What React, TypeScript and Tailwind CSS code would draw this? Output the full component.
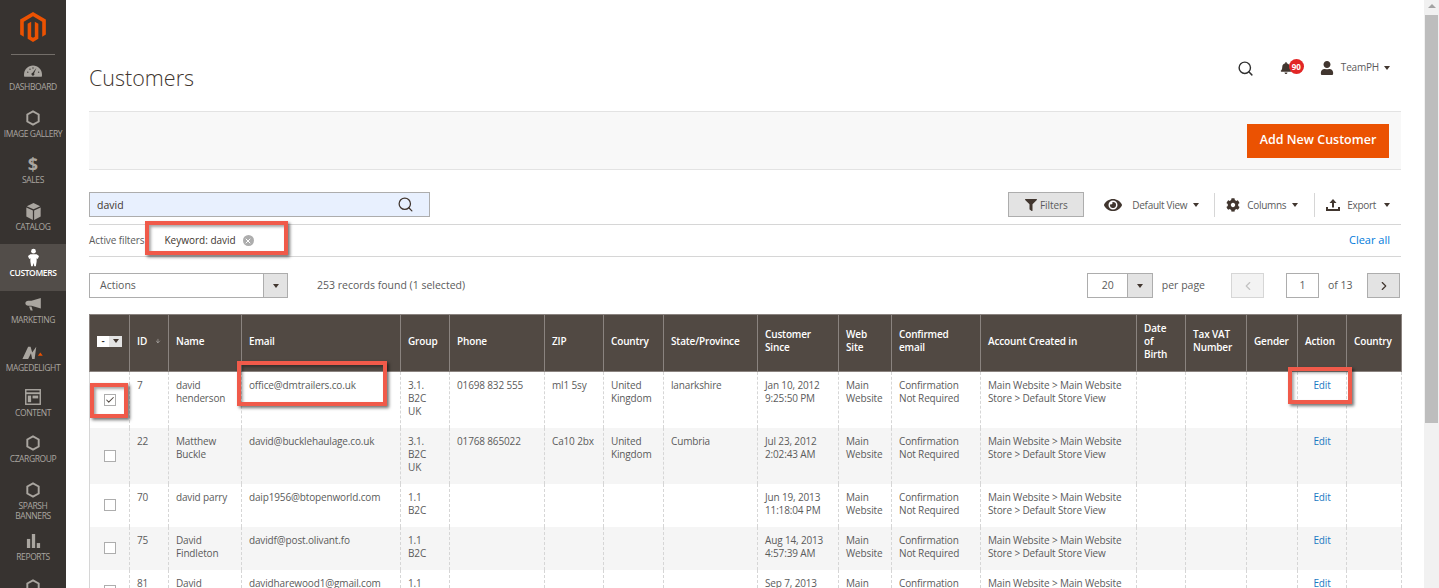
import type { ReactNode } from 'react'
import { Search, ChevronLeft, ChevronRight, ArrowDown, Check, X } from 'lucide-react'
import { FaBell, FaCog, FaEye, FaFilter, FaUser } from 'react-icons/fa'

const Hexagon = () => (
  <svg width="14" height="16" viewBox="0 0 16 18" fill="none" stroke="#aaa6a0" strokeWidth="2.2"><path d="M8 1.5 14.5 5v8L8 16.5 1.5 13V5z" /></svg>
)
const Gauge = () => (
  <svg width="18" height="12" viewBox="0 0 24 15" fill="#aaa6a0"><path d="M12 0C5.4 0 0 5.400 0 12c0 1 .1 2 .4 3h23.200c.3-1 .4-2 .4-3 0-6.600-5.400-12-12-12z" /><path d="M16.500 3.500 13.500 10.500a2 2 0 1 1-2-.8z" fill="#373330" /><circle cx="5" cy="9" r=".9" fill="#373330" /><circle cx="8" cy="5" r=".9" fill="#373330" /><circle cx="12" cy="3.500" r=".9" fill="#373330" /><circle cx="19.500" cy="9" r=".9" fill="#373330" /></svg>
)
const Box = () => (
  <svg width="15" height="17" viewBox="0 0 16 19" fill="#aaa6a0"><path d="M8 0 15.500 3.500 8 7 .5 3.500z" /><path d="M0 5l7.300 3.400V19L0 15z" /><path d="M16 5 8.700 8.400V19L16 15z" /></svg>
)
const Person = () => (
  <svg width="11" height="19" viewBox="0 0 14 22" fill="#fff"><circle cx="7" cy="3" r="3" /><path d="M3 7h8l3 2-1.500 4L11 12v4l-1 6H8l-1-4-1 4H4l-1-6v-4l-1.500 1L0 9z" /></svg>
)
const Megaphone = () => (
  <svg width="17" height="13" viewBox="0 0 20 16" fill="#aaa6a0"><path d="M19 0v13L7.500 9.500H3.500C1.500 9.500 0 8.400 0 6.500s1.500-3 3.500-3h4z" /><path d="M4.500 10.500h3l1.500 5H6.500z" /></svg>
)
const Delight = () => (
  <svg width="22" height="13" viewBox="0 0 26 16" fill="#aaa6a0"><path d="M0 16 7 1h3l2 7 5-7-2 15h-3l-1.500-7L7 16z" /><path d="M19 12l3-4 3 4z" fill="#eb5202" /></svg>
)
const Layout = () => (
  <svg width="16" height="16" viewBox="0 0 17 17" fill="none" stroke="#aaa6a0" strokeWidth="1.500"><rect x=".8" y=".8" width="15.400" height="15.400" /><path d="M.8 4.500h15.400" strokeWidth="2" /><rect x="3" y="7" width="3.500" height="7" fill="#aaa6a0" stroke="none" /><rect x="8" y="7" width="6" height="3" fill="#aaa6a0" stroke="none" /></svg>
)
const Bars = () => (
  <svg width="15" height="14" viewBox="0 0 16 17" fill="#aaa6a0"><rect x="0" y="6" width="4" height="11" /><rect x="6" y="0" width="4" height="17" /><rect x="12" y="11" width="4" height="6" /></svg>
)
const Logo = () => (
  <svg width="26" height="30" viewBox="0 0 24 28" fill="#eb5202"><path d="M12 0 0 7v14l3.400 2V9L12 4l8.600 5v14l3.400-2V7z" /><path d="M13.700 23 12 24l-1.700-1V9L7 11v14l5 3 5-3V11l-3.300-2z" /></svg>
)
const Caret = ({ color = 'border-t-[#41362f]' }: { color?: string }) => (
  <span className={`inline-block w-0 h-0 border-x-[3.500px] border-x-transparent border-t-[4px] ${color}`} />
)

const nav: { label: ReactNode; icon: ReactNode; h: string; active?: boolean }[] = [
  { label: 'DASHBOARD', icon: <Gauge />, h: 'h-[47px]' },
  { label: 'IMAGE GALLERY', icon: <Hexagon />, h: 'h-[46px]' },
  { label: 'SALES', icon: <span className="text-[18px] leading-[18px] font-bold text-[#aaa6a0]">$</span>, h: 'h-[47px]' },
  { label: 'CATALOG', icon: <Box />, h: 'h-[46px]' },
  { label: 'CUSTOMERS', icon: <Person />, h: 'h-[47px]', active: true },
  { label: 'MARKETING', icon: <Megaphone />, h: 'h-[48px]' },
  { label: 'MAGEDELIGHT', icon: <Delight />, h: 'h-[45px]' },
  { label: 'CONTENT', icon: <Layout />, h: 'h-[46px]' },
  { label: 'CZARGROUP', icon: <Hexagon />, h: 'h-[47px]' },
  { label: <>SPARSH<br />BANNERS</>, icon: <Hexagon />, h: 'h-[51px]' },
  { label: 'REPORTS', icon: <Bars />, h: 'h-[46px]' },
  { label: '', icon: <Hexagon />, h: 'h-[46px]' },
]

const Sidebar = () => (
  <aside className="w-[66px] shrink-0 bg-[#373330] flex flex-col items-stretch">
    <div className="h-[54px] shrink-0 flex justify-center pt-[12px]"><Logo /></div>
    <div className="h-px shrink-0 mx-[11px] bg-[#736e69]" />
    <nav className="pt-[3px]">
      {nav.map((n, i) => (
        <div key={i} className={`${n.h} flex flex-col items-center pt-[3px] ${n.active ? 'bg-[#524d49]' : ''}`}>
          <div className="h-[20px] flex items-center justify-center">{n.icon}</div>
          <div className={`mt-[1px] text-center text-[8.500px] leading-[10px] tracking-[-0.4px] whitespace-nowrap ${n.active ? 'text-white font-semibold' : 'text-[#aaa6a0]'}`}>{n.label}</div>
        </div>
      ))}
    </nav>
  </aside>
)

const columns: { title: ReactNode; w: string }[] = [
  { title: '', w: 'w-[40px]' },
  { title: <span className="flex items-center gap-[8px]">ID <ArrowDown size={12} strokeWidth={1.500} /></span>, w: 'w-[39px]' },
  { title: 'Name', w: 'w-[73px]' },
  { title: 'Email', w: 'w-[159px]' },
  { title: 'Group', w: 'w-[49px]' },
  { title: 'Phone', w: 'w-[95px]' },
  { title: 'ZIP', w: 'w-[59px]' },
  { title: 'Country', w: 'w-[60px]' },
  { title: 'State/Province', w: 'w-[94px]' },
  { title: <>Customer<br />Since</>, w: 'w-[81px]' },
  { title: <>Web<br />Site</>, w: 'w-[53px]' },
  { title: <>Confirmed<br />email</>, w: 'w-[89px]' },
  { title: 'Account Created in', w: 'w-[156px]' },
  { title: <>Date<br />of<br />Birth</>, w: 'w-[49px]' },
  { title: <>Tax VAT<br />Number</>, w: 'w-[61px]' },
  { title: 'Gender', w: 'w-[51px]' },
  { title: 'Action', w: 'w-[49px]' },
  { title: 'Country', w: 'w-[55px]' },
]

const rows = [
  { id: '7', name: <>david<br />henderson</>, email: 'office@dmtrailers.co.uk', group: <>3.1.<br />B2C<br />UK</>, phone: '01698 832 555', zip: 'ml1 5sy', country: <>United<br />Kingdom</>, state: 'lanarkshire', since: <>Jan 10, 2012<br />9:25:50 PM</>, h: 'h-[56px]', checked: true },
  { id: '22', name: <>Matthew<br />Buckle</>, email: 'david@bucklehaulage.co.uk', group: <>3.1.<br />B2C<br />UK</>, phone: '01768 865022', zip: 'Ca10 2bx', country: <>United<br />Kingdom</>, state: 'Cumbria', since: <>Jul 23, 2012<br />2:02:43 AM</>, h: 'h-[56px]' },
  { id: '70', name: 'david parry', email: 'daip1956@btopenworld.com', group: <>1.1<br />B2C</>, since: <>Jun 19, 2013<br />11:18:04 PM</>, h: 'h-[43px]' },
  { id: '75', name: <>David<br />Findleton</>, email: 'davidf@post.olivant.fo', group: <>1.1<br />B2C</>, since: <>Aug 14, 2013<br />4:57:39 AM</>, h: 'h-[43px]' },
  { id: '81', name: <>David<br />Harewood</>, email: 'davidharewood1@gmail.com', group: <>1.1<br />B2C</>, since: <>Sep 7, 2013<br />8:12:10 AM</>, h: 'h-[43px]' },
]

const Cell = ({ children, className = '' }: { children?: ReactNode; className?: string }) => (
  <td className={`border-l border-dashed border-[#d6d6d6] px-[7px] pt-[7px] pb-[3px] align-top ${className}`}>{children}</td>
)

const Grid = () => (
  <table className="w-[1312px] table-fixed border-collapse text-[10px] leading-[13px] tracking-[-0.15px] text-[#5b5b5b]">
    <colgroup>{columns.map((c, i) => <col key={i} className={c.w} />)}</colgroup>
    <thead>
      <tr className="h-[57px] bg-[#514943] text-white font-semibold">
        {columns.map((c, i) => (
          <th key={i} className="border border-[#8a837f] px-[7px] pb-[4px] text-left align-middle font-semibold">
            {i === 0 ? (
              <span className="flex justify-center">
                <span className="w-[12px] h-[11px] bg-white text-[#303030] flex items-center justify-center leading-none">-</span>
                <span className="w-[13px] h-[11px] bg-[#e3e3e3] flex items-center justify-center"><Caret /></span>
              </span>
            ) : c.title}
          </th>
        ))}
      </tr>
    </thead>
    <tbody>
      {rows.map((r, i) => (
        <tr key={r.id} className={`${r.h} ${i % 2 ? 'bg-[#f5f5f5]' : 'bg-white'}`}>
          <td className="border-l border-[#d6d6d6] align-middle">
            <span className="mx-auto flex w-[12px] h-[12px] items-center justify-center border border-[#adadad] bg-white">
              {r.checked && <Check size={10} strokeWidth={2.500} className="text-[#514943]" />}
            </span>
          </td>
          <Cell>{r.id}</Cell>
          <Cell>{r.name}</Cell>
          <Cell>{r.email}</Cell>
          <Cell>{r.group}</Cell>
          <Cell>{r.phone}</Cell>
          <Cell>{r.zip}</Cell>
          <Cell>{r.country}</Cell>
          <Cell>{r.state}</Cell>
          <Cell>{r.since}</Cell>
          <Cell>Main<br />Website</Cell>
          <Cell>Confirmation<br />Not Required</Cell>
          <Cell>Main Website &gt; Main Website<br />Store &gt; Default Store View</Cell>
          <Cell />
          <Cell />
          <Cell />
          <Cell className="text-center text-[#1979c3]">Edit</Cell>
          <Cell className="border-r border-r-[#d6d6d6]" />
        </tr>
      ))}
    </tbody>
  </table>
)

const Highlight = ({ className }: { className: string }) => (
  <div className={`absolute border-[4px] border-[#f05a4a] shadow-[2px_2px_3px_rgba(0,0,0,0.55),inset_2px_2px_3px_rgba(0,0,0,0.35)] pointer-events-none ${className}`} />
)

export default function App() {
  return (
    <div className="relative flex h-[588px] w-[1439px] overflow-hidden bg-white text-[#41362f] font-['Open_Sans',sans-serif] text-[11px]">
      <Sidebar />

      <main className="flex-1 min-w-0 px-[23px]">
        <header className="h-[111px] flex items-start justify-between">
          <h1 className="mt-[63px] text-[21.500px] leading-[29px] font-light text-[#41362f]">Customers</h1>
          <div className="mt-[60px] flex items-center h-[16px] pr-[11px]">
            <Search size={17} strokeWidth={2} className="text-[#303030] mr-[26px]" />
            <span className="relative w-[23px] mr-[17px] flex">
              <FaBell size={12} className="text-[#41362f]" />
              <span className="absolute left-[9px] -top-[3px] w-[15px] h-[15px] rounded-full bg-[#e22626] text-white text-[8px] leading-[15px] font-bold text-center">90</span>
            </span>
            <FaUser size={14} className="text-[#41362f] mr-[7px]" />
            <span className="text-[10px] tracking-[-0.2px] text-[#5b5b5b] mr-[5px] pb-[2px]">TeamPH</span>
            <Caret />
          </div>
        </header>

        <div className="h-[59px] bg-[#f8f8f8] border-y border-[#e3e3e3] flex items-center justify-end pr-[12px]">
          <button className="w-[142px] h-[34px] bg-[#eb5202] text-white text-[12.500px] font-semibold">Add New Customer</button>
        </div>

        <div className="mt-[22px] flex items-center h-[25px]">
          <div className="w-[341px] h-[25px] bg-[#e8f0fe] border border-[#adadad] flex items-center justify-between pl-[7px] pr-[15px] text-[10.500px] text-[#41362f]">
            <span className="pt-[2px]">david</span>
            <Search size={17} strokeWidth={1.800} className="text-[#41362f]" />
          </div>
          <button className="ml-auto w-[76px] h-[25px] bg-[#e3e3e3] border border-[#adadad] flex items-center justify-center gap-[3px] text-[10px] tracking-[-0.1px] text-[#5b5b5b]">
            <FaFilter size={12} className="text-[#41362f]" /><span className="pt-[2px]">Filters</span>
          </button>
          <div className="ml-[20px] flex items-center text-[10px] text-[#5b5b5b] tracking-[-0.3px]">
            <FaEye size={18} className="text-[#41362f] mr-[10px]" /><span className="pt-[2px]">Default View</span><span className="ml-[6px] flex"><Caret /></span>
            <span className="w-px h-[24px] bg-[#d6d6d6] ml-[15px] mr-[11px]" />
            <FaCog size={14} className="text-[#41362f] mr-[7px]" /><span className="pt-[2px]">Columns</span><span className="ml-[6px] flex"><Caret /></span>
            <span className="w-px h-[24px] bg-[#d6d6d6] ml-[16px] mr-[11px]" />
            <svg width="14" height="12" viewBox="0 0 14 12" fill="#41362f" className="mr-[7px]"><path d="M7 0 10.500 4H8v4.500H6V4H3.500z" /><path d="M0 8h2v2h10V8h2v4H0z" /></svg>
            <span className="pt-[2px]">Export</span><span className="ml-[8px] mr-[11px] flex"><Caret /></span>
          </div>
        </div>

        <div className="mt-[7px] h-[33px] border-y border-[#d6d6d6] flex items-center justify-between pr-[11px] text-[10px]">
          <div className="flex items-center">
            <span className="text-[#5b5b5b] tracking-[-0.1px]">Active filters</span>
            <span className="ml-[20px] text-[#41362f]">Keyword: david</span>
            <span className="ml-[7px] w-[11px] h-[11px] rounded-full bg-[#adadad] flex items-center justify-center"><X size={8} strokeWidth={3} className="text-white" /></span>
          </div>
          <span className="text-[11px] text-[#007bdb]">Clear all</span>
        </div>

        <div className="mt-[16px] h-[25px] flex items-center text-[10.500px] text-[#5b5b5b]">
          <div className="w-[199px] h-[25px] border border-[#adadad] flex items-center justify-between pl-[10px]">
            Actions
            <span className="w-[24px] h-full bg-[#e3e3e3] border-l border-[#adadad] flex items-center justify-center"><Caret /></span>
          </div>
          <span className="ml-[29px]">253 records found (1 selected)</span>
          <div className="ml-auto w-[66px] h-[25px] border border-[#adadad] flex items-center justify-between pl-[14px]">
            20
            <span className="w-[25px] h-full bg-[#e3e3e3] border-l border-[#adadad] flex items-center justify-center"><Caret /></span>
          </div>
          <span className="ml-[9px]">per page</span>
          <span className="ml-[26px] w-[33px] h-[25px] bg-[#f3f3f3] border border-[#d6d6d6] flex items-center justify-center"><ChevronLeft size={14} className="text-[#c2c2c2]" /></span>
          <span className="ml-[22px] w-[33px] h-[25px] border border-[#adadad] flex items-center justify-center">1</span>
          <span className="ml-[9px] w-[39px]">of 13</span>
          <span className="mr-px w-[33px] h-[25px] bg-[#e3e3e3] border border-[#adadad] flex items-center justify-center"><ChevronRight size={14} className="text-[#41362f]" /></span>
        </div>

        <div className="mt-[16px]"><Grid /></div>
      </main>

      <div className="w-[15px] shrink-0 bg-[#f1f1f1] flex flex-col items-center">
        <span className="mt-[4px] w-0 h-0 border-x-[4px] border-x-transparent border-b-[4px] border-b-[#a3a3a3]" />
        <span className="mt-[7px] w-[13px] h-[408px] bg-[#bdbdbd]" />
      </div>

      <Highlight className="left-[145px] top-[221px] w-[143px] h-[34px]" />
      <Highlight className="left-[90px] top-[383px] w-[38px] h-[35px]" />
      <Highlight className="left-[237px] top-[361px] w-[150px] h-[45px]" />
      <Highlight className="left-[1288px] top-[367px] w-[64px] h-[37px]" />
    </div>
  )
}
